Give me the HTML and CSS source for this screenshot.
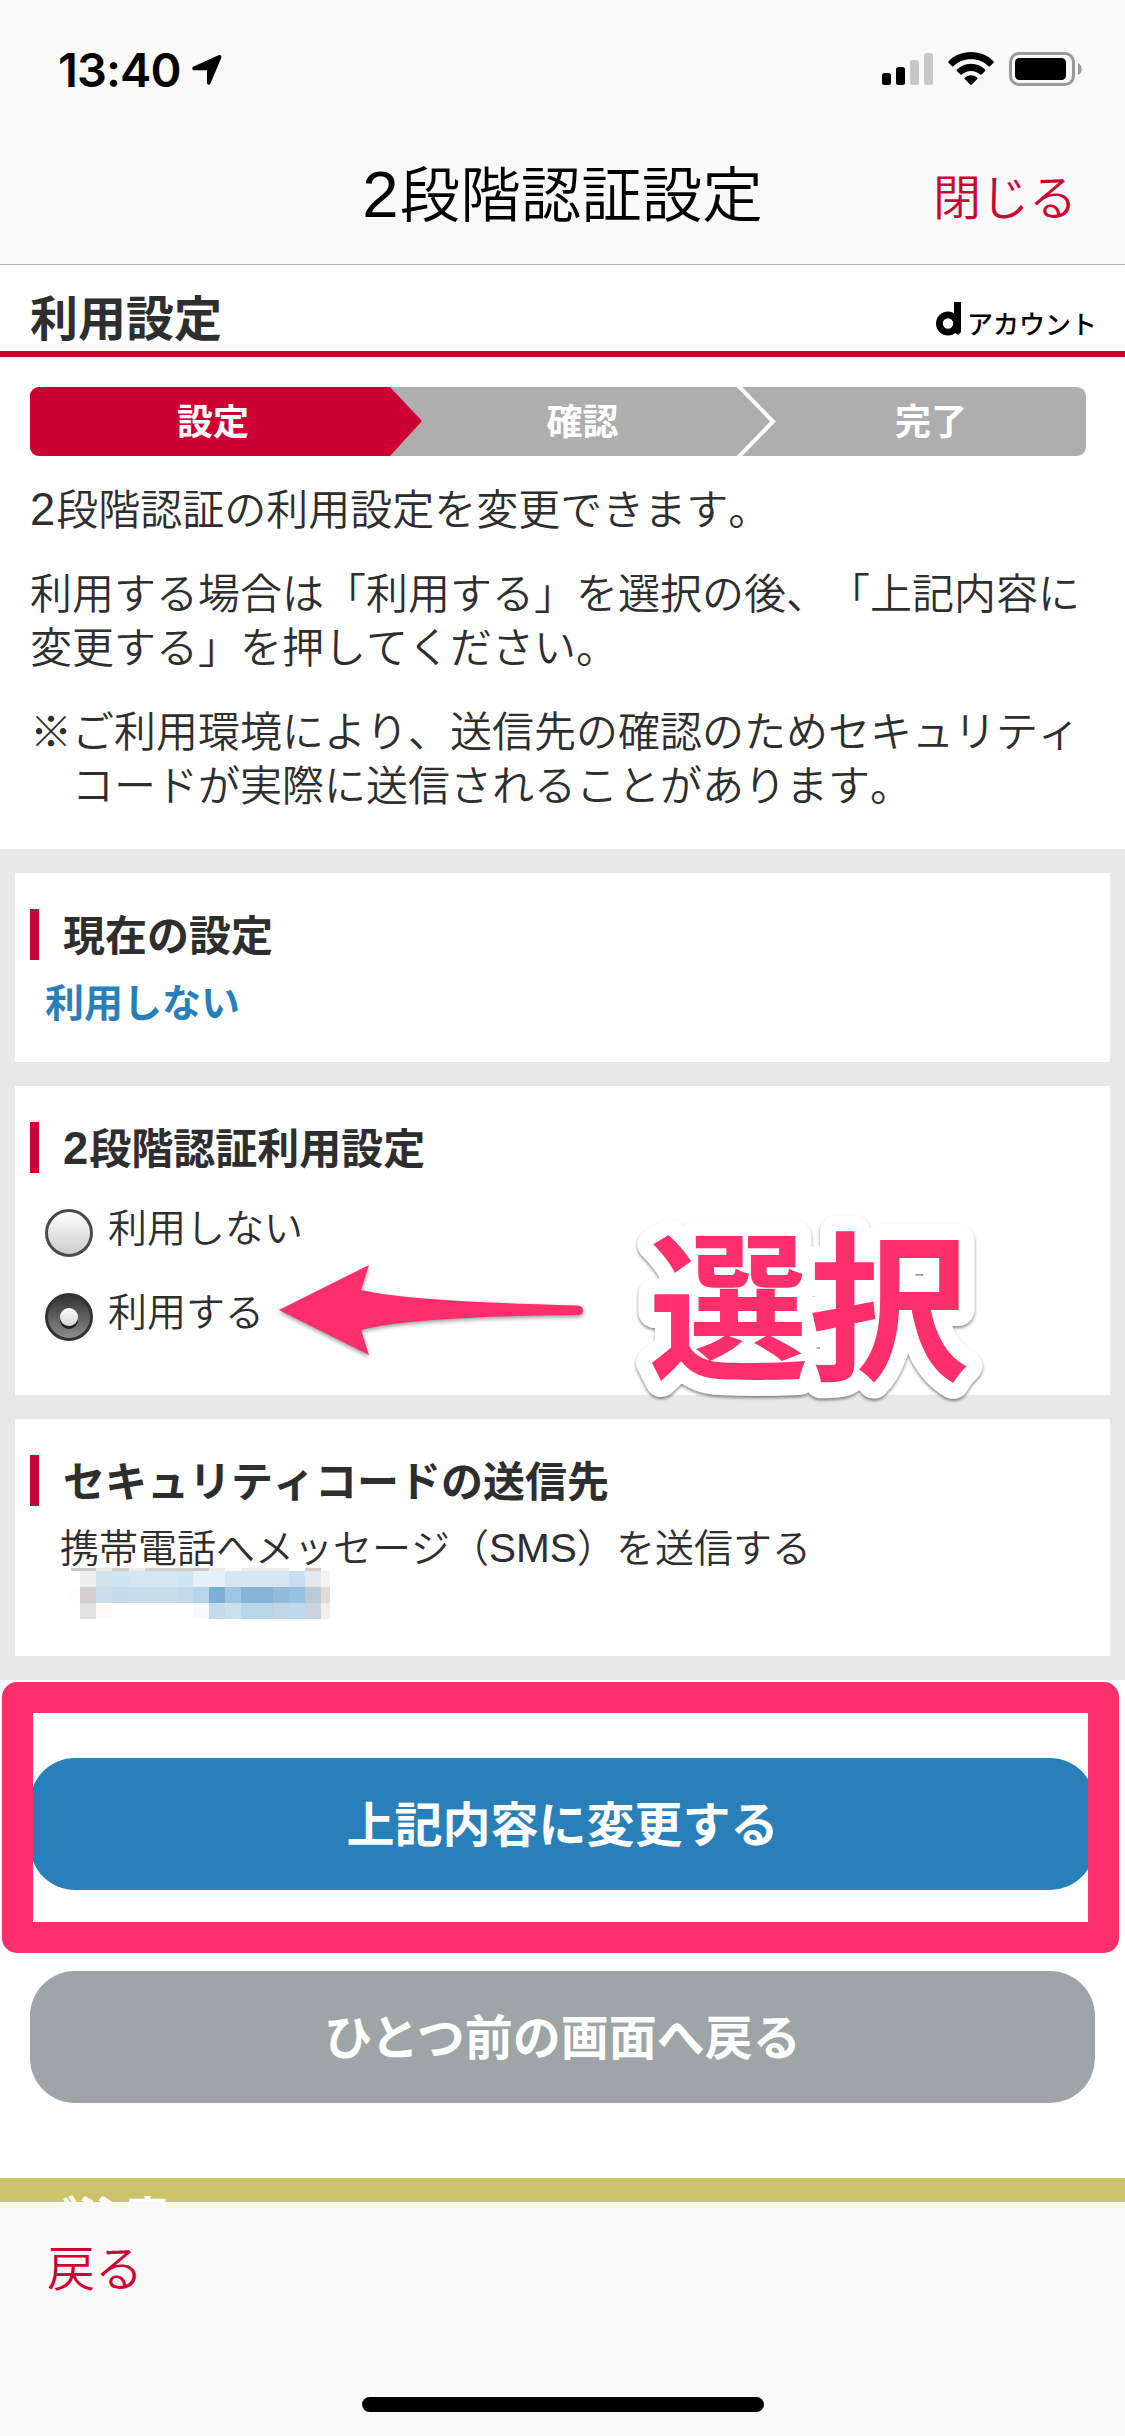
FILE: index.html
```html
<!DOCTYPE html>
<html lang="ja">
<head>
<meta charset="utf-8">
<title>2段階認証設定</title>
<link rel="stylesheet" href="styles.css">
</head>
<body>
<div class="screen">
  <header class="app-header">
    <div class="status-bar">
      <div class="status-left">
        <span class="time">13:40</span>
        <svg class="location" width="30" height="32" viewBox="0 0 30 32"><path d="M26.5 1.2C28.500.4 30 2 29.200 4L18.500 29.500C17.700 31.400 15 31 15 28.800V16.200H2.300C.1 16.200-.4 13.500 1.600 12.600Z"/></svg>
      </div>
      <div class="status-right">
        <svg width="52" height="34" viewBox="0 0 52 34"><rect x="0" y="21" width="9" height="12" rx="2.500"/><rect x="14" y="15" width="9" height="18" rx="2.500"/><rect x="28" y="8" width="9" height="25" rx="2.500" fill="#c7c7c7"/><rect x="42" y="1" width="9" height="32" rx="2.500" fill="#c7c7c7"/></svg>
        <svg class="wifi" width="46" height="34" viewBox="0 0 46 34"><path d="M23 0C32 0 40 3.500 45.500 9.200Q46 10 45.500 10.700L42 14.200Q41.300 14.800 40.600 14.200C36 9.700 30 7.200 23 7.200S10 9.700 5.400 14.200Q4.700 14.800 4 14.200L.5 10.700Q0 10 .5 9.200C6 3.500 14 0 23 0Z"/><path d="M23 11.700C28.500 11.700 33.500 13.900 37.200 17.500Q37.700 18.200 37.200 18.900L33.500 22.500Q32.800 23 32.100 22.500C29.600 20.300 26.500 19 23 19S16.400 20.300 13.900 22.500Q13.200 23 12.500 22.500L8.800 18.900Q8.300 18.200 8.800 17.500C12.500 13.900 17.500 11.700 23 11.700Z"/><path d="M23 23.300C25.500 23.300 27.700 24.200 29.300 25.700Q29.900 26.400 29.300 27.100L23.600 32.700Q23 33.200 22.400 32.700L16.700 27.100Q16.100 26.400 16.700 25.700C18.300 24.200 20.500 23.300 23 23.300Z"/></svg>
        <svg width="74" height="34" viewBox="0 0 74 34"><rect x="1.500" y="1.500" width="63" height="31" rx="8.500" fill="none" stroke="#999" stroke-width="3"/><rect x="6" y="6" width="51" height="22" rx="4.500"/><path d="M69 11C74 13 74 21 69 23Z" fill="#999"/></svg>
      </div>
    </div>
    <nav class="nav-bar">
      <h1 class="nav-title"><span class="digit">2</span>段階認証設定</h1>
      <a class="nav-close">閉じる</a>
    </nav>
  </header>

  <main class="content">
    <div class="page-heading">
      <h2 class="page-title">利用設定</h2>
      <div class="brand">
        <svg width="25" height="34" viewBox="0 0 25 34"><circle cx="12" cy="21.500" r="8.600" fill="none" stroke="#000" stroke-width="6.800"/><path d="M18 0H25V30L22 33L18 30Z"/></svg>
        <span>アカウント</span>
      </div>
    </div>

    <ol class="steps">
      <li class="step step-current">設定</li>
      <li class="step step-middle">確認<svg class="chevron" width="40" height="69" viewBox="0 0 40 69"><path d="M1.500-2L37 34.500L1.500 71" fill="none" stroke="#fff" stroke-width="4"/></svg></li>
      <li class="step step-last">完了</li>
    </ol>

    <div class="intro">
      <p><span class="digit">2</span>段階認証の利用設定を変更できます。</p>
      <p>利用する場合は「利用する」を選択の後、「上記内容に<br>変更する」を押してください。</p>
      <p class="note">※ご利用環境により、送信先の確認のためセキュリティ<br>コードが実際に送信されることがあります。</p>
    </div>

    <div class="cards">
      <section class="card card-current">
        <h3 class="card-title">現在の設定</h3>
        <p class="current-value">利用しない</p>
      </section>

      <section class="card card-choice">
        <h3 class="card-title"><span class="digit">2</span>段階認証利用設定</h3>
        <div class="options">
          <label class="option"><span class="radio"></span>利用しない</label>
          <label class="option"><span class="radio radio-on"></span>利用する</label>
        </div>
        <svg class="callout" width="720" height="200" viewBox="260 1210 720 200">
          <path class="callout-arrow" d="M279 1310L369 1265L361 1290C400 1299 480 1303 578 1305.500Q583 1306 583 1310.500Q583 1315 578 1315C480 1316 400 1320 361 1330L369 1355Z"/>
          <text class="callout-text" x="648.500" y="1368">選択</text>
        </svg>
      </section>

      <section class="card card-target">
        <h3 class="card-title">セキュリティコードの送信先</h3>
        <p class="target">携帯電話へメッセージ（<span class="latin">SMS</span>）を送信する</p>
        <svg class="mosaic" width="259" height="51" viewBox="71 1568 259 51" shape-rendering="crispEdges">
          <path fill="#c9c9c9" d="M71 1568h25v3h-25zM193 1568h16v3h-16z"/><path fill="#eeeae8" d="M96 1568h16v3h-16zM129 1568h16v3h-16zM209 1568h16v3h-16zM241 1568h48v3h-48z"/><path fill="#d3cfcb" d="M112 1568h17v3h-17zM145 1568h48v3h-48zM305 1568h16v3h-16z"/>
          <path fill="#eee" d="M80 1571h16v16h-16z"/><path fill="#d2e2ea" d="M96 1571h16v16h-16z"/><path fill="#cee5f1" d="M112 1571h17v16h-17zM177 1571h16v16h-16z"/><path fill="#d4e6f2" d="M129 1571h48v16h-48zM225 1571h64v16h-64z"/><path fill="#e5f1f8" d="M193 1571h32v16h-32z"/><path fill="#c7dff0" d="M289 1571h16v16h-16z"/><path fill="#e3e8ed" d="M305 1571h16v16h-16z"/><path fill="#f4f4f4" d="M321 1571h9v16h-9z"/>
          <path fill="#fafdfc" d="M71 1587h9v16h-9z"/><path fill="#d2d0cf" d="M80 1587h16v16h-16z"/><path fill="#cadeec" d="M96 1587h16v16h-16z"/><path fill="#c3dae9" d="M112 1587h17v16h-17z"/><path fill="#c6dce9" d="M129 1587h48v16h-48z"/><path fill="#c1d9e8" d="M177 1587h16v16h-16z"/><path fill="#b9d5e9" d="M193 1587h16v16h-16z"/><path fill="#7cafd3" d="M209 1587h16v16h-16z"/><path fill="#a0c5df" d="M225 1587h16v16h-16z"/><path fill="#86b4d5" d="M241 1587h32v16h-32z"/><path fill="#94bbd9" d="M273 1587h16v16h-16z"/><path fill="#97c3e0" d="M289 1587h16v16h-16z"/><path fill="#b9cbd7" d="M305 1587h16v16h-16z"/><path fill="#dddcdb" d="M321 1587h9v16h-9z"/>
          <path fill="#e1e1e1" d="M80 1603h16v16h-16z"/><path fill="#fffaf6" d="M96 1603h16v16h-16z"/><path fill="#f6fbfe" d="M193 1603h16v16h-16z"/><path fill="#c4dbeb" d="M209 1603h16v16h-16z"/><path fill="#cae0ed" d="M225 1603h16v16h-16z"/><path fill="#b9d5e8" d="M241 1603h32v16h-32z"/><path fill="#c0d7e7" d="M273 1603h16v16h-16z"/><path fill="#bed9ee" d="M289 1603h16v16h-16z"/><path fill="#c8d5dd" d="M305 1603h16v16h-16z"/><path fill="#f2eded" d="M321 1603h9v16h-9z"/>
        </svg>
      </section>
    </div>

    <div class="actions">
      <div class="primary-wrap">
        <button class="btn btn-primary">上記内容に変更する</button>
        <div class="highlight"></div>
      </div>
      <button class="btn btn-secondary">ひとつ前の画面へ戻る</button>
    </div>

    <h2 class="notice-title">ご注意</h2>
  </main>

  <footer class="toolbar">
    <a class="toolbar-back">戻る</a>
    <div class="home-indicator"></div>
  </footer>
</div>
</body>
</html>
```
FILE: styles.css
```css
* { box-sizing: border-box; margin: 0; padding: 0; }

body {
  width: 1125px;
  background: #fff;
  color: #2e2e2e;
  font-family: "Noto Sans CJK JP", sans-serif;
  font-weight: 350;
  text-spacing-trim: space-all;
  font-kerning: none;
}

svg { display: block; flex: none; }

.screen {
  display: flex;
  flex-direction: column;
  height: 2436px;
  overflow: hidden;
}

.digit {
  font-family: "Liberation Sans", sans-serif;
  font-size: 1.08em;
  line-height: 1;
  letter-spacing: 0.02em;
}

/* Header */
.app-header {
  flex: none;
  height: 265px;
  background: #f9f9f9;
  border-bottom: 1px solid #b2b2b2;
}

.status-bar {
  display: flex;
  justify-content: space-between;
  align-items: flex-start;
  height: 132px;
  padding: 52px 42px 0 58px;
}

.status-left, .status-right { display: flex; }

.time {
  width: 134px;
  color: #000;
  font: 600 47px/35px Inter, sans-serif;
  letter-spacing: -0.9px;
  white-space: nowrap;
}

.location { margin-top: 2px; }
.status-right > .wifi { margin: 0 15px 0 14px; }

.nav-bar {
  display: grid;
  grid-template-columns: 1fr auto 1fr;
  align-items: start;
  height: 132px;
  padding: 0 48px;
}

.nav-title {
  grid-column: 2;
  color: #000;
  font-size: 60.5px;
  font-weight: 350;
  line-height: 118px;
}

.nav-close {
  justify-self: end;
  color: #c03;
  font-size: 48px;
  line-height: 125px;
}

/* Page heading */
.content {
  flex: 1;
  display: flex;
  flex-direction: column;
  min-height: 0;
  overflow: hidden;
}

.page-heading {
  flex: none;
  display: flex;
  justify-content: space-between;
  height: 92px;
  padding: 0 28px 0 30px;
  border-bottom: 6px solid #c70025;
}

.page-title { font-size: 48px; line-height: 100px; }

.brand {
  display: flex;
  gap: 6px;
  padding-top: 37px;
  color: #000;
  font-size: 26px;
  font-weight: 500;
  line-height: 42px;
}

/* Step indicator */
.steps {
  flex: none;
  display: flex;
  height: 69px;
  margin: 30px 39px 0 30px;
  border-radius: 9px;
  background: #aeaeae;
  overflow: hidden;
  list-style: none;
}

.step {
  display: flex;
  justify-content: center;
  color: #fff;
  font-size: 36px;
  font-weight: 700;
  line-height: 65px;
}

.step-current {
  width: 392px;
  padding-right: 26px;
  background: #c03;
  clip-path: polygon(0 0, 360px 0, 100% 34px, 360px 100%, 0 100%);
}

.step-middle { position: relative; width: 354px; padding-right: 33px; }
.chevron { position: absolute; top: 0; right: 0; }
.step-last { flex: 1; }

/* Intro copy */
.intro {
  flex: none;
  display: flex;
  flex-direction: column;
  gap: 30px;
  height: 393px;
  padding: 24px 30px 0;
  font-size: 42px;
  line-height: 54px;
  white-space: nowrap;
}

.note { padding-left: 42px; text-indent: -42px; }

/* Setting cards */
.cards {
  flex: none;
  display: flex;
  flex-direction: column;
  gap: 24px;
  padding: 24px 15px;
  background: #e8e8e8;
}

.card { padding: 36px 15px 0; background: #fff; }
.card-current { height: 189px; }
.card-choice { position: relative; height: 309px; }
.card-target { height: 237px; }

.card-title {
  height: 51px;
  padding-left: 24px;
  border-left: 9px solid #c03;
  font-size: 42px;
  line-height: 47px;
}

.current-value {
  padding-left: 15px;
  color: #2980b9;
  font-size: 39px;
  font-weight: 700;
  line-height: 81px;
}

.options {
  display: flex;
  flex-direction: column;
  gap: 36px;
  padding: 36px 0 0 15px;
}

.option {
  display: flex;
  gap: 15px;
  height: 48px;
  font-size: 39px;
  line-height: 32px;
}

.radio {
  width: 48px;
  height: 48px;
  border: 3px solid #4a4a4a;
  border-radius: 50%;
  background: linear-gradient(#fff, #ccc);
}

.radio-on {
  display: flex;
  align-items: center;
  justify-content: center;
  border-color: #333;
  background: linear-gradient(#333, #8c8c8c);
}

.radio-on::before {
  content: "";
  width: 18px;
  height: 18px;
  border-radius: 50%;
  background: linear-gradient(#fff, #d5d5d5);
  box-shadow: 0 3px 0 #222;
}

.callout { position: absolute; left: 245px; top: 124px; overflow: visible; }

.callout-arrow {
  fill: #ff2f6c;
  filter: drop-shadow(0 2px 2px rgba(0, 0, 0, 0.4));
}

.callout-text {
  fill: #ff2f6c;
  stroke: #fff;
  stroke-width: 32px;
  stroke-linejoin: round;
  paint-order: stroke;
  font-size: 160px;
  font-weight: 700;
  filter: drop-shadow(0 2px 1.5px rgba(0, 0, 0, 0.45));
}

.target {
  height: 62px;
  padding-left: 30px;
  font-size: 39px;
  line-height: 78px;
  white-space: nowrap;
}

.latin {
  font-family: "Liberation Sans", sans-serif;
  font-size: 1.04em;
  line-height: 1;
}

.mosaic { margin-left: 41px; }

/* Buttons */
.actions {
  flex: none;
  display: flex;
  flex-direction: column;
  gap: 81px;
  height: 498px;
  padding: 78px 30px 0;
}

.primary-wrap { position: relative; }

.btn {
  display: block;
  width: 1065px;
  height: 132px;
  padding-bottom: 6px;
  border: 0;
  border-radius: 45px;
  color: #fff;
  font: 700 48px/126px "Noto Sans CJK JP", sans-serif;
  text-align: center;
}

.btn-primary { background: #2980b9; }
.btn-secondary { background: #9fa4a6; }

.highlight {
  position: absolute;
  left: -28px;
  top: -76px;
  width: 1117px;
  height: 271px;
  border: 31px solid #ff2f6c;
  border-radius: 15px;
}

.notice-title {
  flex: none;
  height: 80px;
  padding-left: 30px;
  background: #cdc36a;
  color: #fff;
  font-size: 47px;
  line-height: 75px;
}

/* Bottom toolbar */
.toolbar {
  flex: none;
  display: flex;
  flex-direction: column;
  justify-content: space-between;
  height: 234px;
  padding: 0 47px 24px;
  background: #f9f9f9;
}

.toolbar-back { color: #c03; font-size: 48px; line-height: 126px; }

.home-indicator {
  align-self: center;
  width: 402px;
  height: 15px;
  border-radius: 8px;
  background: #000;
}
```
